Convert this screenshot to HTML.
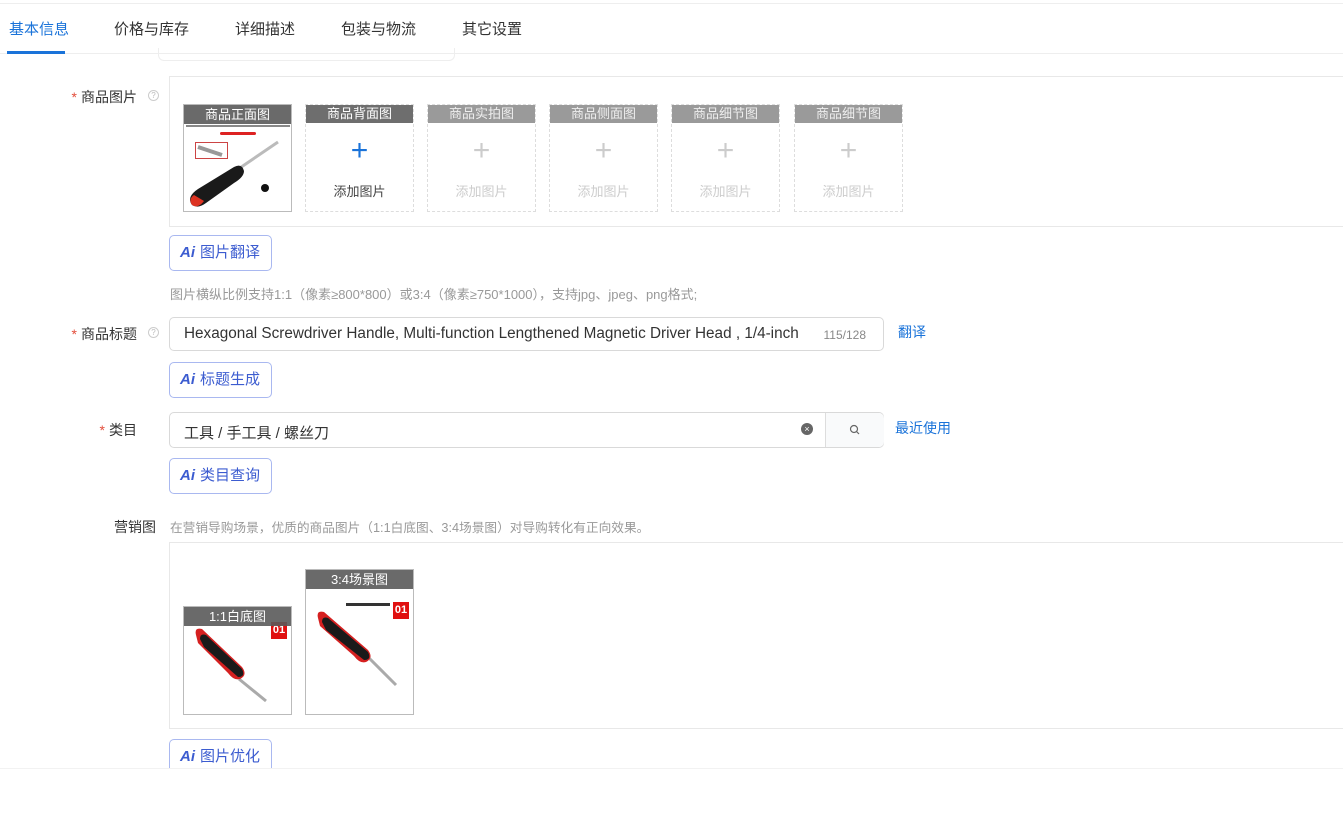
<!DOCTYPE html>
<html><head><meta charset="utf-8"><style>
*{margin:0;padding:0;box-sizing:border-box}
body{width:1343px;height:823px;background:#fff;font-family:"Liberation Sans","Noto Sans CJK SC",sans-serif;color:#333;position:relative;overflow:hidden}
.a{position:absolute}
.tab{position:absolute;top:18px;font-size:15px;color:#333}
.lbl{position:absolute;font-size:14px;color:#333;text-align:right;width:137px;left:0}
.star{color:#e34d3b;margin-right:4px}
.q{position:absolute;width:11px;height:11px;border:1px solid #ccc;border-radius:50%;font-size:8px;color:#bbb;text-align:center;line-height:9px}
.box{position:absolute;border:1px solid #e8e8e8;border-right:none}
.tile{position:absolute;width:109px;height:108px;border:1px dashed #ddd;background:#fff}
.tile .h{height:18px;background:#6e6e6e;color:#fff;font-size:13px;text-align:center;line-height:18px}
.tile.off .h{background:#9a9a9a;color:#eee}
.tile .p{position:absolute;left:0;right:0;top:28px;text-align:center;font-size:30px;color:#ccc;font-weight:200;line-height:36px}
.tile .t{position:absolute;left:0;right:0;top:76px;text-align:center;font-size:13px;color:#ccc}
.ai{position:absolute;left:169px;width:103px;height:36px;border:1px solid #a9b8f0;border-radius:5px;color:#3c5cd0;font-size:15px;line-height:34px;padding-left:10px}
.ai b{font-style:italic;font-weight:900;font-size:15px;margin-right:5px}
.inp{position:absolute;left:169px;width:715px;border:1px solid #d9d9d9;border-radius:5px;background:#fff}
.link{position:absolute;color:#1a73d9;font-size:14px}
.hint{position:absolute;color:#999}
.img{position:absolute;border:1px solid #bbb;background:#fff;overflow:hidden}
.img .h{position:absolute;left:0;right:0;top:0;height:19px;background:rgba(90,90,90,.9);color:#fff;font-size:13px;text-align:center;line-height:19px;z-index:2}
</style></head><body>
<div class="a" style="left:0;right:0;top:3px;height:1px;background:#eee"></div>
<div class="tab" style="left:9px;color:#1a73d9">基本信息</div>
<div class="tab" style="left:114px">价格与库存</div>
<div class="tab" style="left:235px">详细描述</div>
<div class="tab" style="left:341px">包装与物流</div>
<div class="tab" style="left:462px">其它设置</div>
<div class="a" style="left:0;right:0;top:53px;height:1px;background:#eee"></div>
<div class="a" style="left:7px;width:58px;top:51px;height:3px;background:#1a73d9"></div>
<div class="a" style="left:158px;width:297px;top:48px;height:13px;border:1px solid #eee;border-top:none;border-radius:0 0 6px 6px"></div>

<div class="lbl" style="top:87px"><span class="star">*</span>商品图片</div>
<div class="q" style="left:148px;top:90px">?</div>
<div class="box" style="left:169px;top:76px;width:1180px;height:151px"></div>
<div class="img" style="left:183px;top:104px;width:109px;height:108px">
<div class="h">商品正面图</div>
<div class="a" style="left:2px;top:20px;width:104px;height:2px;background:#888"></div>
<div class="a" style="left:36px;top:27px;width:36px;height:3px;background:#d22;border-radius:2px"></div>
<div class="a" style="left:11px;top:37px;width:33px;height:17px;border:1px solid #c44"></div>
<svg class="a" style="left:0;top:0" width="109" height="108"><line x1="14" y1="42" x2="38" y2="50" stroke="#999" stroke-width="4"/><line x1="50" y1="67" x2="94" y2="37" stroke="#bbb" stroke-width="3"/><path d="M8 100 Q2 92 14 84 L50 62 Q58 58 60 66 Q60 72 50 78 L22 98 Q14 104 8 100Z" fill="#1a1a1a"/><path d="M8 100 Q4 94 10 90 L20 96 Q14 104 8 100Z" fill="#d32"/><circle cx="81" cy="83" r="4" fill="#111"/></svg>
</div>
<div class="tile" style="left:305px;top:104px"><div class="h">商品背面图</div><div class="p" style="color:#1a73d9">+</div><div class="t" style="color:#444">添加图片</div></div>
<div class="tile off" style="left:427px;top:104px"><div class="h">商品实拍图</div><div class="p">+</div><div class="t">添加图片</div></div>
<div class="tile off" style="left:549px;top:104px"><div class="h">商品侧面图</div><div class="p">+</div><div class="t">添加图片</div></div>
<div class="tile off" style="left:671px;top:104px"><div class="h">商品细节图</div><div class="p">+</div><div class="t">添加图片</div></div>
<div class="tile off" style="left:794px;top:104px"><div class="h">商品细节图</div><div class="p">+</div><div class="t">添加图片</div></div>
<div class="ai" style="top:235px"><b>Ai</b>图片翻译</div>
<div class="hint" style="left:170px;top:284px;font-size:13px">图片横纵比例支持1:1（像素≥800*800）或3:4（像素≥750*1000），支持jpg、jpeg、png格式;</div>

<div class="lbl" style="top:324px"><span class="star">*</span>商品标题</div>
<div class="q" style="left:148px;top:327px">?</div>
<div class="inp" style="top:317px;height:34px"><span class="a" style="left:14px;top:7px;font-size:15.3px;color:#333;white-space:nowrap">Hexagonal Screwdriver Handle, Multi-function Lengthened Magnetic Driver Head , 1/4-inch</span><span class="a" style="right:17px;top:10px;font-size:12px;color:#888">115/128</span></div>
<div class="link" style="left:898px;top:322px">翻译</div>
<div class="ai" style="top:362px"><b>Ai</b>标题生成</div>

<div class="lbl" style="top:420px"><span class="star">*</span>类目</div>
<div class="inp" style="top:412px;height:36px"><span class="a" style="left:14px;top:9px;font-size:15px">工具 / 手工具 / 螺丝刀</span><span class="a" style="left:631px;top:10px;width:12px;height:12px;border-radius:50%;background:#666;color:#fff;font-size:9px;text-align:center;line-height:12px">×</span><div class="a" style="left:655px;top:0;width:59px;height:34px;border-left:1px solid #ddd;background:#f9fafb;border-radius:0 5px 5px 0"><svg class="a" style="left:23px;top:11px" width="12" height="12"><circle cx="5" cy="5" r="3.5" stroke="#666" fill="none" stroke-width="1.2"/><line x1="7.5" y1="7.5" x2="10" y2="10" stroke="#666" stroke-width="1.2"/></svg></div></div>
<div class="link" style="left:895px;top:418px">最近使用</div>
<div class="ai" style="top:458px"><b>Ai</b>类目查询</div>

<div class="lbl" style="top:517px;width:156px">营销图</div>
<div class="hint" style="left:170px;top:517px;font-size:12.7px">在营销导购场景，优质的商品图片（1:1白底图、3:4场景图）对导购转化有正向效果。</div>
<div class="box" style="left:169px;top:542px;width:1180px;height:187px"></div>
<div class="img" style="left:183px;top:606px;width:109px;height:109px"><div class="h">1:1白底图</div>
<div class="a" style="left:87px;top:15px;width:16px;height:17px;background:#e01010;color:#fff;font-size:11px;font-weight:bold;text-align:center;line-height:17px">01</div>
<svg class="a" style="left:0;top:0" width="109" height="109"><line x1="55" y1="72" x2="82" y2="94" stroke="#aaa" stroke-width="3"/><path d="M12 28 Q10 20 18 22 L58 60 Q64 68 56 72 Q50 74 44 66 L14 36Z" fill="#d52020"/><path d="M16 32 Q16 26 22 28 L58 62 Q62 70 54 70 L20 40Z" fill="#1a1a1a"/></svg></div>
<div class="img" style="left:305px;top:569px;width:109px;height:146px"><div class="h">3:4场景图</div>
<div class="a" style="left:87px;top:32px;width:16px;height:17px;background:#e01010;color:#fff;font-size:11px;font-weight:bold;text-align:center;line-height:17px">01</div>
<div class="a" style="left:40px;top:33px;width:44px;height:3px;background:#333"></div>
<svg class="a" style="left:0;top:0" width="109" height="146"><line x1="60" y1="85" x2="90" y2="115" stroke="#aaa" stroke-width="3"/><path d="M12 48 Q10 40 18 42 L62 80 Q68 88 60 92 Q54 94 48 86 L14 56Z" fill="#d52020"/><path d="M16 52 Q16 46 22 48 L62 82 Q66 90 58 90 L20 60Z" fill="#1a1a1a"/></svg></div>
<div class="ai" style="top:739px;height:30px;border-bottom:none;border-radius:5px 5px 0 0"><b>Ai</b>图片优化</div>
<div class="a" style="left:0;right:0;top:768px;height:55px;background:#fff;border-top:1px solid #f2f2f2"></div>
</body></html>
